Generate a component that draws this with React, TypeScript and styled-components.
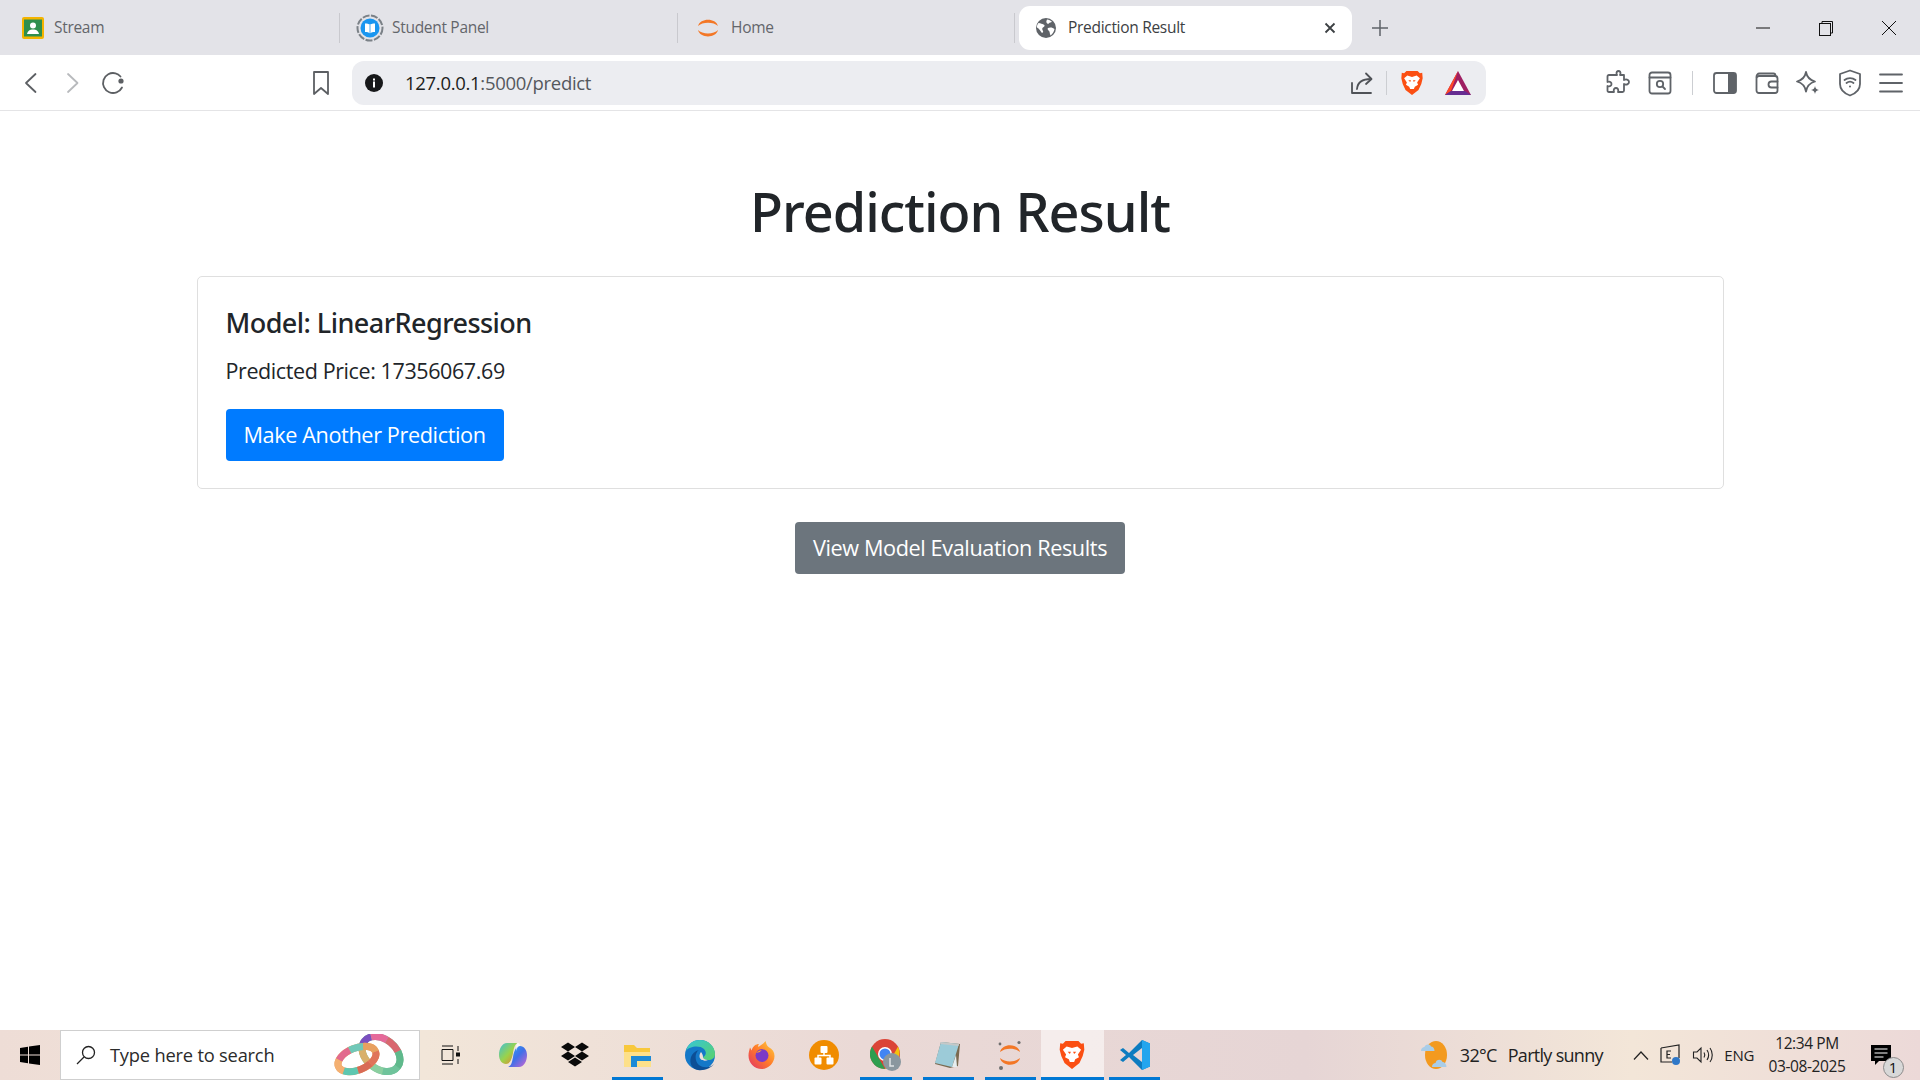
import React from "react";
import styled, { createGlobalStyle } from "styled-components";

const Global = createGlobalStyle`
  html, body { margin: 0; padding: 0; height: 100%; background: #fff; }
  #root { height: 100%; }
  * { box-sizing: border-box; }
  body { font-family: "Open Sans", "Liberation Sans", sans-serif; color: #212529; overflow: hidden; }
`;

const Icon = styled.svg<{ $w: number; $h?: number }>`
  width: ${(p) => p.$w}px;
  height: ${(p) => p.$h ?? p.$w}px;
  flex: none;
  display: block;
`;

/* ---------- browser icons ---------- */

const ClassroomFavicon = () => (
  <Icon $w={22} viewBox="0 0 22 22">
    <rect width="22" height="22" rx="2" fill="#f4b400" />
    <rect x="2" y="2.5" width="18" height="17" fill="#2f8f4e" />
    <circle cx="11" cy="8.5" r="3" fill="#fff" />
    <path d="M5 17c.6-3.4 3-4.6 6-4.6s5.400 1.200 6 4.600z" fill="#fff" />
  </Icon>
);

const StudentFavicon = () => (
  <Icon $w={28} viewBox="0 0 28 28">
    <circle cx="14" cy="14" r="12.500" fill="none" stroke="#7b8187" strokeWidth="2" strokeDasharray="7 1.500" />
    <circle cx="14" cy="14" r="9.500" fill="#1a96f0" />
    <path d="M9 9.500c2 0 3.800.3 5 1.300 1.200-1 3-1.300 5-1.300v8.500c-2 0-3.800.3-5 1.300-1.200-1-3-1.300-5-1.300z" fill="#fff" />
    <path d="M14 11v8" stroke="#1a96f0" strokeWidth=".8" />
  </Icon>
);

const JupyterArcs = ({ size = 24 }: { size?: number }) => (
  <Icon $w={size} viewBox="0 0 24 24">
    <path d="M2 10C4 1.500 20 1.500 22 10 18 5.500 6 5.500 2 10z" fill="#f37726" />
    <path d="M2 14c2 8.500 18 8.500 20 0-4 4.500-16 4.500-20 0z" fill="#f37726" />
  </Icon>
);

const GlobeFavicon = () => (
  <Icon $w={20} viewBox="0 0 20 20">
    <circle cx="10" cy="10" r="10" fill="#5f6368" />
    <path d="M2.500 5c2.500.2 3.500 1 5 1.500s1.500 2-.2 2.800-1 2.500-.3 3.700-1 2.500-1.500 1.500S3 10.500 1 9.500C.7 8 1.500 6 2.500 5zM11 1.500c2 .2 3.700 1 5 2.300-1 .8-2.500.4-3 1.500s-2 .5-2.500-.8.2-2 .5-3zM12 10c2-1 5-.5 6.500 1-.5 3-2 5-4 6.500-1-2-.5-3.500-1.500-4.500s-2-2.200-1-3z" fill="#fff" />
  </Icon>
);

const BackIcon = () => (
  <Icon $w={24} viewBox="0 0 24 24" fill="none" stroke="#5c5f63" strokeWidth="1.800" strokeLinecap="round" strokeLinejoin="round">
    <path d="M16.500 3 7 12l9.500 9" />
  </Icon>
);

const ForwardIcon = () => (
  <Icon $w={24} viewBox="0 0 24 24" fill="none" stroke="#b8babd" strokeWidth="1.800" strokeLinecap="round" strokeLinejoin="round">
    <path d="M8 3l9.500 9L8 21" />
  </Icon>
);

const ReloadIcon = () => (
  <Icon $w={26} viewBox="0 0 26 26" fill="none">
    <path d="M22 17.500A10 10 0 1 1 15.500 3.300c2 .5 3.700 1.700 5 3.200" stroke="#5c5f63" strokeWidth="1.800" strokeLinecap="round" />
    <circle cx="21" cy="11" r="2.600" fill="#5c5f63" />
  </Icon>
);

const BookmarkIcon = () => (
  <Icon $w={20} $h={26} viewBox="0 0 20 26" fill="none" stroke="#5c5f63" strokeWidth="1.800" strokeLinejoin="round">
    <path d="M3 2h14v22l-7-6-7 6z" />
  </Icon>
);

const InfoIcon = () => (
  <Icon $w={18} viewBox="0 0 18 18">
    <circle cx="9" cy="9" r="9" fill="#17181a" />
    <rect x="8" y="7.500" width="2" height="6" fill="#fff" />
    <rect x="8" y="4.500" width="2" height="2" fill="#fff" />
  </Icon>
);

const ShareIcon = () => (
  <Icon $w={24} viewBox="0 0 24 24" fill="none" stroke="#4f5257" strokeWidth="1.800" strokeLinecap="round" strokeLinejoin="round">
    <path d="M2 12v10h19" />
    <path d="M7 18c.5-6 4.500-10 14-10" />
    <path d="M16 2.500 21.500 8 16 13" />
  </Icon>
);

const BraveLion = ({ size = 26 }: { size?: number }) => (
  <Icon $w={size} viewBox="0 0 24 28">
    <path d="M6 1h12l2.500 2.500L23 3l.5 6-1.500 6-3 6.500-7 5.500-7-5.500L2 15 .5 9 1 3l2.500.5z" fill="#fb4f13" />
    <path d="M7 6l5 1.500L17 6l3.500 3-3 4.500 1 2.500-3.500 2-1 2.500h-4L9 18l-3.500-2 1-2.500-3-4.500z" fill="#fff" />
    <path d="M8 11h3l-1 2zM16 11h-3l1 2zM10 20.500h4L12 24z" fill="#fb4f13" />
  </Icon>
);

const BatTriangle = () => (
  <Icon $w={26} $h={24} viewBox="0 0 26 24">
    <path d="M13 0 26 24H0z" fill="#9e1f63" />
    <path d="M13 0 0 24l6-4z" fill="#ff4724" />
    <path d="M0 24h26l-6-4H6z" fill="#662d91" />
    <path d="M13 9l6 11H7z" fill="#fff" />
  </Icon>
);

const strokeGrey = { fill: "none", stroke: "#5f6368", strokeWidth: 1.800, strokeLinejoin: "round" as const, strokeLinecap: "round" as const };

const PuzzleIcon = () => (
  <Icon $w={26} viewBox="0 0 26 26" {...strokeGrey}>
    <path d="M9 5h3c-1.500-3 .5-4 1.500-4s3 1 1.500 4h4v5c3-1.500 5 .5 5 2s-2 3.500-5 2v6.500c0 1-.5 1.500-1.500 1.500h-4.500c1-3-.8-4-2-4s-3 1-2 4H4c-1 0-1.500-.5-1.500-1.500V16c3 1 4-.8 4-2s-1-3-4-2V6.500C2.500 5.500 3 5 4 5z" />
  </Icon>
);

const LeoSearchTab = () => (
  <Icon $w={24} viewBox="0 0 24 24" {...strokeGrey}>
    <rect x="1.500" y="1.500" width="21" height="21" rx="2.500" />
    <path d="M1.500 6.500h21" />
    <circle cx="12" cy="13" r="3.200" />
    <path d="M14.500 15.500 17 18" />
  </Icon>
);

const SidebarIcon = () => (
  <Icon $w={24} viewBox="0 0 24 24">
    <rect x="1" y="2" width="22" height="20" rx="2.500" fill="none" stroke="#5f6368" strokeWidth="1.800" />
    <path d="M15 2h5.500A2.500 2.500 0 0 1 23 4.500v15a2.500 2.500 0 0 1-2.500 2.500H15z" fill="#5f6368" />
  </Icon>
);

const WalletIcon = () => (
  <Icon $w={24} viewBox="0 0 24 24" {...strokeGrey}>
    <path d="M1.500 6c0-2 1-3.500 3-3.500h14c1.500 0 2 .8 2 2.500" />
    <rect x="1.500" y="5" width="21" height="17" rx="2.500" />
    <path d="M22.500 10.500h-6a3 3 0 0 0 0 6h6" />
  </Icon>
);

const LeoStars = () => (
  <Icon $w={26} viewBox="0 0 26 26" fill="none">
    <path d="M11 2c1 5.500 3.500 8 9 9.500-5.500 1.500-8 4-9 10-1-6-3.500-8.500-9-10C7.500 10 10 7.500 11 2z" stroke="#5f6368" strokeWidth="1.800" strokeLinejoin="round" />
    <path d="M20 16c.4 2.500 1.500 3.500 4 4-2.500.5-3.600 1.500-4 4-.4-2.500-1.500-3.500-4-4 2.500-.5 3.600-1.500 4-4z" fill="#5f6368" />
  </Icon>
);

const VpnShield = () => (
  <Icon $w={22} $h={28} viewBox="0 0 22 28" {...strokeGrey}>
    <path d="M11 1.500 21 5v10c0 6-4.500 9.500-10 11.500C5.500 24.500 1 21 1 15V5z" />
    <path d="M5.500 11c3-2.500 8-2.500 11 0M7.500 14c2-1.600 5-1.600 7 0" />
    <circle cx="11" cy="17.500" r="1" fill="#5f6368" stroke="none" />
  </Icon>
);

const MenuIcon = () => (
  <Icon $w={24} viewBox="0 0 24 24" stroke="#5f6368" strokeWidth="1.800" strokeLinecap="round">
    <path d="M1 3.500h22M1 12h22M1 20.500h22" />
  </Icon>
);

const MinIcon = () => (
  <Icon $w={16} viewBox="0 0 16 16" stroke="#111" strokeWidth="1"><path d="M1 8h14" /></Icon>
);
const RestoreIcon = () => (
  <Icon $w={16} viewBox="0 0 16 16" fill="none" stroke="#111" strokeWidth="1">
    <rect x="1.500" y="3.500" width="11" height="12" />
    <path d="M4 3.500V1.500h10.500V13h-2" />
  </Icon>
);
const CloseIcon = () => (
  <Icon $w={16} viewBox="0 0 16 16" stroke="#111" strokeWidth="1"><path d="M1 1l14 14M15 1 1 15" /></Icon>
);
const TabClose = () => (
  <Icon $w={12} viewBox="0 0 12 12" stroke="#3c4043" strokeWidth="1.800"><path d="M1.500 1.500l9 9M10.500 1.500l-9 9" /></Icon>
);
const PlusIcon = () => (
  <Icon $w={16} viewBox="0 0 16 16" stroke="#5f6368" strokeWidth="1.500"><path d="M8 0v16M0 8h16" /></Icon>
);

/* ---------- taskbar icons ---------- */

const WindowsLogo = () => (
  <Icon $w={20} viewBox="0 0 20 20" fill="#000">
    <path d="M0 3l8-1.200v7.700H0zM9 1.600 20 0v9.500H9zM0 10.500h8v7.700L0 17zM9 10.500h11V20L9 18.400z" />
  </Icon>
);
const SearchGlass = () => (
  <Icon $w={20} viewBox="0 0 20 20" fill="none" stroke="#222" strokeWidth="1.300">
    <circle cx="12.500" cy="7.500" r="6" />
    <path d="M8 12 1 19" />
  </Icon>
);

const ringBack = ["#6fc39b", "#8bcfa0", "#d9b06a", "#7a4fc0", "#e56a9a", "#d9686f", "#5fb98c"];
const ringFront = ["#e0745a", "#d96a55", "#5ec7b0", "#f4b071", "#e26a8e", "#70c8b8", "#e8a060"];

const Rings = () => (
  <Icon $w={74} $h={42} viewBox="0 0 74 42" fill="none">
    <ellipse cx="48" cy="20" rx="21" ry="15" transform="rotate(38 48 20)" stroke="#7fbf9a" strokeWidth="7" />
    {ringBack.map((c, i) => (
      <ellipse key={c + i} cx="48" cy="20" rx="21" ry="15" transform="rotate(38 48 20)" stroke={c} strokeWidth="7" pathLength={70} strokeDasharray="10 60" strokeDashoffset={-i * 10} />
    ))}
    <ellipse cx="24" cy="25" rx="20" ry="11" transform="rotate(-22 24 25)" stroke="#e8a060" strokeWidth="7" />
    {ringFront.map((c, i) => (
      <ellipse key={c + i} cx="24" cy="25" rx="20" ry="11" transform="rotate(-22 24 25)" stroke={c} strokeWidth="7" pathLength={70} strokeDasharray="10 60" strokeDashoffset={-i * 10} />
    ))}
  </Icon>
);
const TaskView = () => (
  <Icon $w={20} viewBox="0 0 20 20" fill="none" stroke="#111" strokeWidth="1">
    <path d="M1 1h11M1 19h11M1 4.500h11v11H1z" />
    <path d="M17 1v5M17 14v5" />
    <rect x="15.500" y="8" width="3" height="3" fill="#111" />
  </Icon>
);
const Copilot = () => (
  <Icon $w={30} viewBox="0 0 30 30">
    <defs>
      <linearGradient id="copA" x1="0" x2="1" y1="0" y2="1">
        <stop offset="0" stopColor="#2fa8ef" />
        <stop offset=".5" stopColor="#3f6fe8" />
        <stop offset="1" stopColor="#d066d0" />
      </linearGradient>
      <linearGradient id="copB" x1="0" x2="1" y1="0" y2="1">
        <stop offset="0" stopColor="#3fc0d8" />
        <stop offset=".5" stopColor="#9ad34a" />
        <stop offset="1" stopColor="#f2782c" />
      </linearGradient>
    </defs>
    <path d="M9 3h11c-3 1-4 4-5 10s-3 11-7 11c-4 0-7-4-7-9C1 9 4 3 9 3z" fill="url(#copB)" />
    <path d="M21 27H10c3-1 4-4 5-10s3-11 7-11c4 0 7 4 7 9 0 6-3 12-8 12z" fill="url(#copA)" />
    <path d="M19 3h1c1 0 2 1 2 3-2 0-3 2-4 5 0-3 0-6 1-8z" fill="#fff" opacity=".7" />
  </Icon>
);
const Dropbox = () => (
  <Icon $w={30} viewBox="0 0 30 30" fill="#0a0a0a">
    <path d="M8 2.500l7 4.500-7 4.500L1 7zM22 2.500 29 7l-7 4.500L15 7zM8 11.500 15 16l-7 4.500L1 16zM22 11.500 29 16l-7 4.500L15 16zM8 22l7-4.500 7 4.500-7 4.500z" />
  </Icon>
);
const ExplorerFolder = () => (
  <Icon $w={30} $h={28} viewBox="0 0 30 28">
    <path d="M2 4h10l3 3h13v19H2z" fill="#f8c83c" />
    <path d="M2 11h26v15H2z" fill="#fde08a" />
    <path d="M9 15h20v5H15v6H9z" fill="#1c8ad6" />
    <path d="M15 20h14v6H15z" fill="#fde08a" />
  </Icon>
);
const Edge = () => (
  <Icon $w={32} viewBox="0 0 32 32">
    <defs>
      <linearGradient id="edgeA" x1="0" x2="1" y1="0" y2="1">
        <stop offset="0" stopColor="#36c6d8" />
        <stop offset="1" stopColor="#5bd16a" />
      </linearGradient>
    </defs>
    <circle cx="16" cy="16" r="15" fill="#1478c8" />
    <path d="M2 12C4 4 10 1 16 1c9 0 15 7 15 14 0 4-3 6-7 6-3 0-5-1-5-3 3-1 4-5 1-8-4-4-15-3-18 2z" fill="url(#edgeA)" />
    <path d="M14 31c-6-1-9-7-7-13 1-3 4-6 8-7-3 2-4 6-3 10 1 5 6 8 12 7 2 0 4-1 6-3-3 4-10 7-16 6z" fill="#0c4f96" />
    <path d="M19 18c0 2 3 3 5 3-2 1-5 1-7-.5s-2-5 0-7.500c1 1 2 3 2 5z" fill="#efdfdb" />
  </Icon>
);
const Firefox = () => (
  <Icon $w={30} viewBox="0 0 30 30">
    <defs>
      <linearGradient id="foxA" x1="0" x2="1" y1="1" y2="0">
        <stop offset="0" stopColor="#e0306a" />
        <stop offset=".5" stopColor="#ff7a2a" />
        <stop offset="1" stopColor="#ffd23c" />
      </linearGradient>
    </defs>
    <path d="M15 29C7 29 1.500 23 1.500 15.500c0-3 1-6 1.500-8 .8 1 1 2 1.500 3C6 6 9 4 12 4c-1 1-1 2-.5 3 2-2 5-3 7-6 1 3 1 4 3 6 4 2 6 5 6 9 0 7-6 13-13 13z" fill="url(#foxA)" />
    <circle cx="15" cy="15.500" r="6.500" fill="#7b3ac8" />
    <path d="M9 13c2-2 6-4 10-3-3-1-5 0-6 2l-4 1z" fill="#ff9a2a" />
  </Icon>
);
const OrangeHub = () => (
  <Icon $w={30} viewBox="0 0 30 30">
    <ellipse cx="15" cy="15" rx="15" ry="15" fill="#f08c00" />
    <g fill="#fff">
      <rect x="11.500" y="6" width="7" height="7" rx="1" />
      <rect x="5.500" y="17.500" width="7" height="7" rx="1" />
      <rect x="17.500" y="17.500" width="7" height="7" rx="1" />
    </g>
    <path d="M15 12v3.500M9 18v-2.500h12V18" fill="none" stroke="#fff" strokeWidth="1.500" />
  </Icon>
);
const ChromeProfile = () => (
  <Icon $w={32} viewBox="0 0 32 32">
    <circle cx="15" cy="15" r="15" fill="#db4437" />
    <path d="M15 30A15 15 0 0 1 2 7.500L9 19.500z" fill="#2e9e4f" />
    <path d="M15 30l7-11.500L28 7.500c4 8 0 20-13 22.500z" fill="#f4c20d" />
    <circle cx="15" cy="15" r="7" fill="#fff" />
    <circle cx="15" cy="15" r="5.500" fill="#4285f4" />
    <circle cx="22" cy="23" r="9" fill="#8a979f" />
    <path d="M20 19v8h4" fill="none" stroke="#dfe4e6" strokeWidth="1.500" />
  </Icon>
);
const Notepad = () => (
  <Icon $w={30} viewBox="0 0 30 30">
    <path d="M8 2l19 2-2 22-8 2-15-4z" fill="#7a6a50" />
    <path d="M8 2 26 4l-7 23-17-4z" fill="#9ccbd8" />
    <path d="M19 27l4-12 1 12z" fill="#e6eef0" />
    <path d="M8 2l18 2-.5 2-18-2z" fill="#c4c8c8" />
  </Icon>
);
const JupyterDots = () => (
  <Icon $w={28} $h={32} viewBox="0 0 28 32">
    <path d="M4 13C6 4 22 4 24 13 19 8.500 9 8.500 4 13z" fill="#f37726" />
    <path d="M4 19c2 9 18 9 20 0-5 4.500-15 4.500-20 0z" fill="#f37726" />
    <circle cx="23" cy="3.500" r="1.600" fill="#6f6f6f" />
    <circle cx="4" cy="5" r="1.400" fill="#6f6f6f" />
    <circle cx="5" cy="29" r="2" fill="#6f6f6f" />
  </Icon>
);
const VSCode = () => (
  <Icon $w={32} viewBox="0 0 32 32">
    <path d="M23 1 31 4.500v23L23 31 10 18l-6 5-3-2 6-5-6-5 3-2 6 5z" fill="#0d7cc0" />
    <path d="M23 1 31 4.500v23L23 31z" fill="#23a5ee" />
    <path d="M23 9v14l-9-7z" fill="#e8d6d5" />
  </Icon>
);
const Weather = () => (
  <Icon $w={32} viewBox="0 0 32 32">
    <ellipse cx="16" cy="16" rx="11" ry="14" fill="#f39a1f" />
    <path d="M1 12c0-3 2-4 3.500-4C5 5 10 4.500 11 7.500c2 0 3.500 2 3.500 4.500z" fill="#a9cde8" />
    <path d="M12 28c0-3 2-4 3.500-4 .5-4 6-4.500 7-1 2 0 4 2 4 5z" fill="#a9cde8" />
  </Icon>
);
const Chevron = () => (
  <Icon $w={18} $h={12} viewBox="0 0 18 12" fill="none" stroke="#222" strokeWidth="1.200"><path d="M2 10.500 9 3l7 7.500" /></Icon>
);
const MeetIcon = () => (
  <Icon $w={22} viewBox="0 0 22 22">
    <path d="M1 4l18-3v13M1 4v14h11" fill="none" stroke="#222" strokeWidth="1.200" />
    <path d="M11 7H7v7h4M7 10.500h3" fill="none" stroke="#222" strokeWidth="1.200" />
    <circle cx="16" cy="17" r="4" fill="#2f78c8" />
  </Icon>
);
const Speaker = () => (
  <Icon $w={22} viewBox="0 0 22 22" fill="none" stroke="#222" strokeWidth="1.100">
    <path d="M1.500 8v6H5l4 4V4L5 8z" />
    <path d="M12 8.500c1 1.500 1 3.500 0 5M15 6c2 3 2 7 0 10M18 4c3 4 3 10 0 14" />
  </Icon>
);
const NotifIcon = () => (
  <Icon $w={20} viewBox="0 0 20 20">
    <path d="M0 0h20v16H8l-4 4v-4H0z" fill="#000" />
    <path d="M3.500 4h13M3.500 8h13M3.500 12h9" stroke="#fff" strokeWidth="1.200" />
  </Icon>
);

/* ---------- browser chrome ---------- */

const Shell = styled.div`
  display: flex;
  flex-direction: column;
  height: 100vh;
`;

const TabStrip = styled.div`
  display: flex;
  align-items: center;
  height: 55px;
  flex: none;
  padding-left: 4px;
  background: #e3e3e8;
`;

const Tab = styled.div<{ $width: number; $active?: boolean; $gap?: number; $pad?: number }>`
  display: flex;
  align-items: center;
  gap: ${(p) => p.$gap ?? 10}px;
  width: ${(p) => p.$width}px;
  height: ${(p) => (p.$active ? 44 : 30)}px;
  padding-left: ${(p) => p.$pad ?? 18}px;
  padding-right: 16px;
  border-radius: ${(p) => (p.$active ? "11px" : "0")};
  border-right: ${(p) => (p.$active ? "none" : "1px solid #c9c9ce")};
  background: ${(p) => (p.$active ? "#fff" : "transparent")};
  color: ${(p) => (p.$active ? "#3c4043" : "#63666b")};
  font-size: 15.500px;
  letter-spacing: -0.3px;
  white-space: nowrap;
`;

const TabTitle = styled.span`
  flex: 1;
  margin-top: -1px;
`;

const LastGap = styled.div`
  width: 4px;
`;

const NewTab = styled.div`
  display: flex;
  justify-content: center;
  width: 56px;
`;

const WindowControls = styled.div`
  display: flex;
  margin-left: auto;
`;

const WindowButton = styled.div`
  display: flex;
  align-items: center;
  justify-content: center;
  width: 63px;
  height: 55px;
`;

const Toolbar = styled.div`
  display: flex;
  align-items: center;
  flex: none;
  height: 56px;
  padding-left: 10px;
  padding-right: 8px;
  background: #fff;
  border-bottom: 1px solid #e4e4e6;
`;

const ToolSlot = styled.div<{ $w?: number }>`
  display: flex;
  align-items: center;
  justify-content: center;
  flex: none;
  width: ${(p) => p.$w ?? 41.500}px;
  height: 44px;
`;

const NavSlot = styled(ToolSlot)`
  width: 41px;
`;

const BookmarkSlot = styled(ToolSlot)`
  margin-left: 169.500px;
  margin-right: 13.500px;
`;

const AddressBar = styled.div`
  display: flex;
  align-items: center;
  width: 1134px;
  height: 44px;
  padding-left: 13px;
  padding-right: 15px;
  border-radius: 12px;
  background: #ecedf1;
`;

const Url = styled.div`
  flex: 1;
  margin-left: 22px;
  font-size: 18.500px;
  letter-spacing: -0.3px;
  color: #1c1d20;
`;

const UrlHost = styled.span`
  color: #1c1d20;
`;

const UrlPath = styled.span`
  color: #55585d;
`;

const ThinRule = styled.div<{ $mx: number }>`
  width: 1px;
  height: 24px;
  margin: 0 ${(p) => p.$mx}px;
  background: #ccced2;
  flex: none;
`;

const BatSlot = styled.div`
  margin-left: 20px;
  flex: none;
`;

const RightTools = styled.div`
  display: flex;
  align-items: center;
  margin-left: auto;
`;

/* ---------- page ---------- */

const Page = styled.main`
  flex: 1;
  display: flex;
  flex-direction: column;
  align-items: center;
  padding-top: 67px;
  background: #fff;
`;

const Title = styled.h1`
  margin: 0 0 31px;
  font-family: "Noto Sans", "Open Sans", sans-serif;
  font-size: 54px;
  line-height: 67px;
  font-weight: 500;
  letter-spacing: -1px;
  color: #212529;
`;

const Card = styled.section`
  width: 1527px;
  height: 213px;
  padding: 29px 28px 0;
  border: 1px solid #dfdfdf;
  border-radius: 5px;
`;

const CardTitle = styled.h5`
  margin: 0 0 14px;
  font-family: "Noto Sans", "Open Sans", sans-serif;
  font-size: 27px;
  line-height: 34px;
  font-weight: 500;
  letter-spacing: -0.550px;
`;

const CardText = styled.p`
  margin: 0 0 21px;
  font-size: 21.500px;
  line-height: 34px;
  letter-spacing: -0.400px;
`;

const Button = styled.a<{ $tone: "primary" | "secondary" }>`
  display: inline-flex;
  align-items: center;
  justify-content: center;
  height: 52px;
  padding: 0 18px 2px;
  border-radius: 4px;
  font-size: 21.700px;
  letter-spacing: -0.400px;
  color: #fff;
  background: ${(p) => (p.$tone === "primary" ? "#007bff" : "#6c757d")};
`;

const EvalWrap = styled.div`
  margin-top: 33px;
`;

/* ---------- taskbar ---------- */

const Taskbar = styled.footer`
  display: flex;
  align-items: stretch;
  flex: none;
  height: 50px;
  background: linear-gradient(90deg, #eeddd6 0%, #f2e6d9 22%, #ead9d6 45%, #e6d5d5 68%, #f3e6d8 85%, #ecd9d8 100%);
`;

const StartButton = styled.div`
  display: flex;
  align-items: center;
  justify-content: center;
  width: 60px;
`;

const SearchBox = styled.div`
  display: flex;
  align-items: center;
  width: 360px;
  padding: 0 12px 0 15px;
  background: #fff;
  border: 1px solid #cfcfcf;
  font-size: 18.300px;
  letter-spacing: -0.200px;
  color: #2b2b2b;
`;

const SearchText = styled.span`
  flex: 1;
  margin-left: 14px;
  margin-top: -2px;
`;

const TaskIcons = styled.div`
  display: flex;
`;

const TaskButton = styled.div<{ $running?: boolean; $active?: boolean }>`
  position: relative;
  display: flex;
  align-items: center;
  justify-content: center;
  width: 62.150px;
  background: ${(p) => (p.$active ? "rgba(255,255,255,.55)" : "transparent")};
  &::after {
    content: "";
    display: ${(p) => (p.$running ? "block" : "none")};
    position: absolute;
    left: ${(p) => (p.$active ? 0 : 5.500)}px;
    right: ${(p) => (p.$active ? 0 : 5.500)}px;
    bottom: 0;
    height: 3px;
    background: #0078d4;
  }
`;

const Tray = styled.div`
  display: flex;
  align-items: center;
  margin-left: auto;
  color: #222;
`;

const WeatherLabel = styled.div`
  display: flex;
  gap: 11px;
  margin-left: 8px;
  margin-right: 29px;
  font-size: 18px;
  letter-spacing: -0.700px;
`;

const TrayGroup = styled.div`
  display: flex;
  align-items: center;
  gap: 10px;
`;

const Lang = styled.div`
  margin-left: 10.500px;
  font-size: 15px;
  letter-spacing: -0.300px;
`;

const Clock = styled.div`
  display: flex;
  flex-direction: column;
  align-items: center;
  gap: 4px;
  width: 84px;
  margin-left: 11px;
  font-size: 15.500px;
  line-height: 19px;
  letter-spacing: -0.400px;
`;

const Notif = styled.div`
  position: relative;
  display: flex;
  margin-left: 21.500px;
  margin-right: 29.500px;
`;

const NotifBadge = styled.span`
  position: absolute;
  right: -13px;
  bottom: -13px;
  width: 21px;
  height: 21px;
  border-radius: 50%;
  border: 1px solid #8a8a8a;
  background: #d8d8d8;
  color: #111;
  font-size: 15px;
  line-height: 19px;
  text-align: center;
`;

export default function App() {
  return (
    <Shell>
      <Global />
      <TabStrip>
        <Tab $width={336}>
          <ClassroomFavicon />
          <TabTitle>Stream</TabTitle>
        </Tab>
        <Tab $width={338} $gap={8} $pad={16}>
          <StudentFavicon />
          <TabTitle>Student Panel</TabTitle>
        </Tab>
        <Tab $width={337} $gap={11}>
          <JupyterArcs />
          <TabTitle>Home</TabTitle>
        </Tab>
        <LastGap />
        <Tab $width={333} $active $gap={12} $pad={17}>
          <GlobeFavicon />
          <TabTitle>Prediction Result</TabTitle>
          <TabClose />
        </Tab>
        <NewTab>
          <PlusIcon />
        </NewTab>
        <WindowControls>
          <WindowButton><MinIcon /></WindowButton>
          <WindowButton><RestoreIcon /></WindowButton>
          <WindowButton><CloseIcon /></WindowButton>
        </WindowControls>
      </TabStrip>

      <Toolbar>
        <NavSlot><BackIcon /></NavSlot>
        <NavSlot><ForwardIcon /></NavSlot>
        <NavSlot><ReloadIcon /></NavSlot>
        <BookmarkSlot $w={36}><BookmarkIcon /></BookmarkSlot>
        <AddressBar>
          <InfoIcon />
          <Url>
            <UrlHost>127.0.0.1</UrlHost>
            <UrlPath>:5000/predict</UrlPath>
          </Url>
          <ShareIcon />
          <ThinRule $mx={12} />
          <BraveLion />
          <BatSlot><BatTriangle /></BatSlot>
        </AddressBar>
        <RightTools>
          <ToolSlot><PuzzleIcon /></ToolSlot>
          <ToolSlot><LeoSearchTab /></ToolSlot>
          <ThinRule $mx={11.500} />
          <ToolSlot><SidebarIcon /></ToolSlot>
          <ToolSlot><WalletIcon /></ToolSlot>
          <ToolSlot><LeoStars /></ToolSlot>
          <ToolSlot><VpnShield /></ToolSlot>
          <ToolSlot><MenuIcon /></ToolSlot>
        </RightTools>
      </Toolbar>

      <Page>
        <Title>Prediction Result</Title>
        <Card>
          <CardTitle>Model: LinearRegression</CardTitle>
          <CardText>Predicted Price: 17356067.69</CardText>
          <Button $tone="primary">Make Another Prediction</Button>
        </Card>
        <EvalWrap>
          <Button $tone="secondary">View Model Evaluation Results</Button>
        </EvalWrap>
      </Page>

      <Taskbar>
        <StartButton><WindowsLogo /></StartButton>
        <SearchBox>
          <SearchGlass />
          <SearchText>Type here to search</SearchText>
          <Rings />
        </SearchBox>
        <TaskIcons>
          <TaskButton><TaskView /></TaskButton>
          <TaskButton><Copilot /></TaskButton>
          <TaskButton><Dropbox /></TaskButton>
          <TaskButton $running><ExplorerFolder /></TaskButton>
          <TaskButton><Edge /></TaskButton>
          <TaskButton><Firefox /></TaskButton>
          <TaskButton><OrangeHub /></TaskButton>
          <TaskButton $running><ChromeProfile /></TaskButton>
          <TaskButton $running><Notepad /></TaskButton>
          <TaskButton $running><JupyterDots /></TaskButton>
          <TaskButton $running $active><BraveLion size={30} /></TaskButton>
          <TaskButton $running><VSCode /></TaskButton>
        </TaskIcons>
        <Tray>
          <Weather />
          <WeatherLabel>
            <span>32°C</span>
            <span>Partly sunny</span>
          </WeatherLabel>
          <TrayGroup>
            <Chevron />
            <MeetIcon />
            <Speaker />
          </TrayGroup>
          <Lang>ENG</Lang>
          <Clock>
            <span>12:34 PM</span>
            <span>03-08-2025</span>
          </Clock>
          <Notif>
            <NotifIcon />
            <NotifBadge>1</NotifBadge>
          </Notif>
        </Tray>
      </Taskbar>
    </Shell>
  );
}
